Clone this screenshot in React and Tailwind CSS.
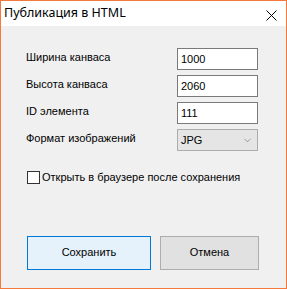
import { ChevronDown } from 'lucide-react';

const fields = [
  { label: 'Ширина канваса', value: '1000' },
  { label: 'Высота канваса', value: '2060' },
  { label: 'ID элемента', value: '111' },
];

export default function App() {
  return (
    <div className="w-[287px] h-[289px] border border-[#f5793b] flex flex-col bg-[#f0f0f0] font-['Liberation_Sans',Arial,sans-serif] text-black">
      {/* Title bar */}
      <div className="h-[25px] bg-white flex items-center justify-between pl-[3px] pr-[9px] shrink-0">
        <span className="text-[12.5px] font-['Noto_Sans',sans-serif] leading-none">Публикация в HTML</span>
        <svg width="11" height="11" viewBox="0 0 11 11" className="mt-[3px]">
          <path d="M0.5 0.5 L10.5 10.5 M10.5 0.5 L0.5 10.5" stroke="#000" strokeWidth="1" />
        </svg>
      </div>

      {/* Body */}
      <div className="flex-1 flex flex-col pl-[25px] pt-[22px]">
        <div className="flex flex-col gap-[5px]">
          {fields.map(({ label, value }) => (
            <div key={label} className="flex items-center h-[22px]">
              <span className="w-[151px] text-[11px] mb-[3px]">{label}</span>
              <div className="w-[81px] h-[22px] bg-white border border-[#7a7a7a] flex items-center pl-[3px] text-[11px]">
                {value}
              </div>
            </div>
          ))}
          <div className="flex items-center h-[22px]">
            <span className="w-[151px] text-[11px] mb-[3px]">Формат изображений</span>
            <div className="w-[81px] h-[22px] bg-[#e5e5e5] border border-[#adadad] flex items-center justify-between pl-[3px] pr-[4px] text-[11px]">
              JPG
              <ChevronDown size={11} strokeWidth={1.2} className="text-[#606060]" />
            </div>
          </div>
        </div>

        <label className="flex items-center mt-[18px] ml-[1px] text-[11px]">
          <span className="w-[13px] h-[13px] border border-[#333] bg-white mr-[2px]" />
          Открыть в браузере после сохранения
        </label>

        <div className="flex gap-[9px] mt-[50px] ml-[1px]">
          <button className="w-[124px] h-[34px] bg-[#e5f1fb] border border-[#0078d7] text-[11px]">Сохранить</button>
          <button className="w-[99px] h-[34px] bg-[#e1e1e1] border border-[#adadad] text-[11px]">Отмена</button>
        </div>
      </div>
    </div>
  );
}
